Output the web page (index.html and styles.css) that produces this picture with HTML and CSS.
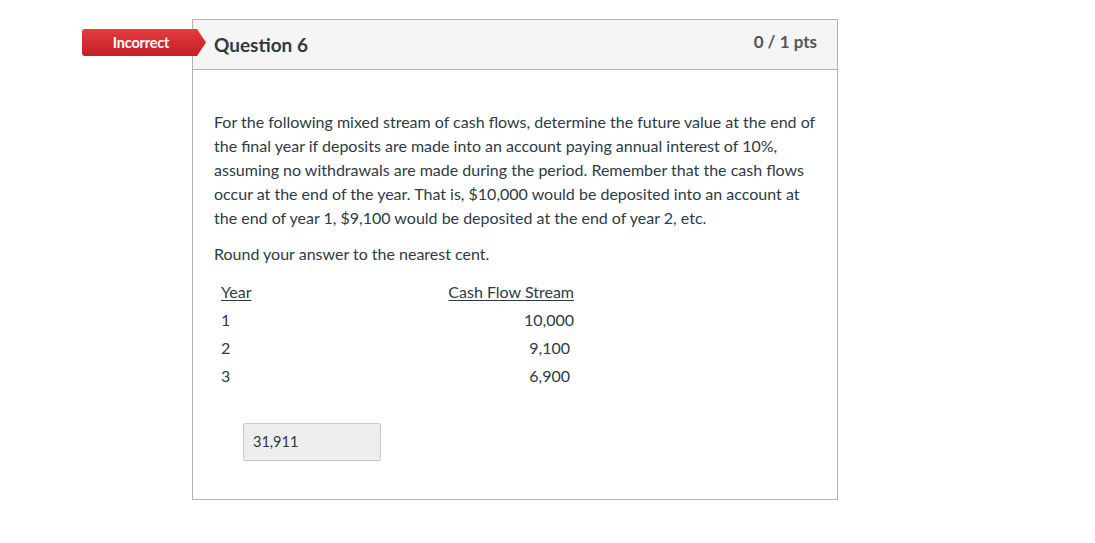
FILE: index.html
```html
<!DOCTYPE html>
<html lang="en">
<head>
<meta charset="utf-8">
<title>Question 6</title>
<link rel="stylesheet" href="styles.css">
</head>
<body>
<div class="page">
  <div class="question">
    <div class="badge">Incorrect</div>
    <div class="q-header">
      <span class="q-name">Question 6</span>
      <span class="q-pts">0 / 1 pts</span>
    </div>
    <div class="q-body">
      <p>For the following mixed stream of cash flows, determine the future value at the end of the final year if deposits are made into an account paying annual interest of 10%, assuming no withdrawals are made during the period. Remember that the cash flows occur at the end of the year. That is, $10,000 would be deposited into an account at the end of year 1, $9,100 would be deposited at the end of year 2, etc.</p>
      <p>Round your answer to the nearest cent.</p>
      <table class="cf">
        <thead>
          <tr><th class="c1">Year</th><th class="c2">Cash Flow Stream</th></tr>
        </thead>
        <tbody>
          <tr><td class="c1">1</td><td class="c2">10,000</td></tr>
          <tr><td class="c1">2</td><td class="c2 pad">9,100</td></tr>
          <tr><td class="c1">3</td><td class="c2 pad">6,900</td></tr>
        </tbody>
      </table>
      <div class="answer">31,911</div>
    </div>
  </div>
</div>
</body>
</html>
```
FILE: styles.css
```css
html, body {
  margin: 0;
  padding: 0;
  background: #fff;
}
body {
  font-family: Lato, "Open Sans", sans-serif;
  color: #2d3b45;
}
.page {
  padding: 19px 0 0 192px;
}
.question {
  position: relative;
  width: 644px;
  height: 479px;
  border: 1px solid #b4b4b4;
  box-sizing: content-box;
}
.badge {
  position: absolute;
  left: -111px;
  top: 9px;
  width: 124px;
  height: 27px;
  box-sizing: border-box;
  padding-right: 6px;
  display: flex;
  align-items: center;
  justify-content: center;
  color: #fff;
  font-size: 14.5px;
  font-weight: 700;
  letter-spacing: -0.2px;
  background: linear-gradient(#e53c3f, #c41f24);
  border-radius: 3px 0 0 3px;
  clip-path: polygon(0 0, 115px 0, 124px 50%, 115px 100%, 0 100%);
}
.q-header {
  height: 49px;
  background: #f5f5f5;
  border-bottom: 1px solid #b4b4b4;
  display: flex;
  justify-content: space-between;
  align-items: center;
  padding: 0 20px 0 21px;
}
.q-name {
  font-size: 19px;
  font-weight: 700;
  color: #2d3b45;
  margin-top: 0;
}
.q-pts {
  font-size: 17px;
  font-weight: 700;
  color: #555;
  margin-top: -7px;
}
.q-body {
  padding: 40px 21px 0 21px;
  font-size: 16px;
  line-height: 24px;
}
.q-body p {
  margin: 0 0 12px 0;
}
.cf {
  border-collapse: collapse;
  width: 367px;
  margin-top: 12px;
}
.cf th, .cf td {
  padding: 2px 7px;
  font-size: 16px;
  line-height: 24px;
  font-weight: 400;
}
.cf th {
  text-decoration: underline;
  text-underline-offset: 2px;
}
.c1 {
  text-align: left;
}
.c2 {
  text-align: right;
}
.c2.pad {
  padding-right: 11px;
}
.answer {
  margin: 33px 0 0 29px;
  width: 138px;
  height: 38px;
  box-sizing: border-box;
  border: 1px solid #c8c8c8;
  border-radius: 2px;
  background: #eeeeee;
  font-size: 14.5px;
  line-height: 36px;
  padding-left: 9px;
  color: #2d3b45;
}
```
